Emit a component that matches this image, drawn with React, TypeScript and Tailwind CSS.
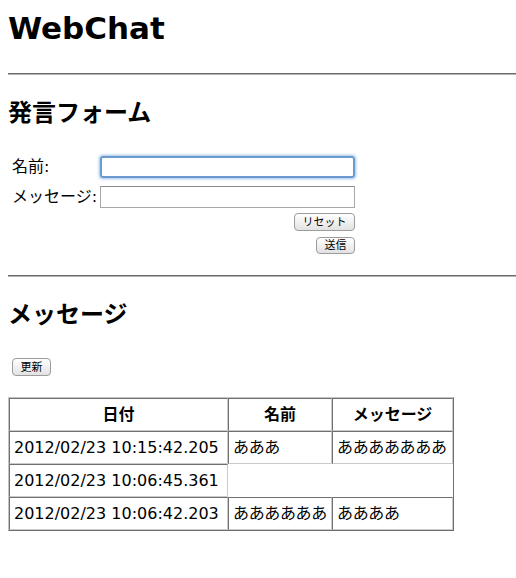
import React from 'react';

type Row = { date: string; name?: string; message?: string };

const rows: Row[] = [
  { date: '2012/02/23 10:15:42.205', name: 'あああ', message: 'あああああああ' },
  { date: '2012/02/23 10:06:45.361' },
  { date: '2012/02/23 10:06:42.203', name: 'ああああああ', message: 'ああああ' },
];

const btn =
  'border border-[#9c9c9c] rounded-[4px] bg-gradient-to-b from-white to-[#e2e2e2] text-[11px] leading-none text-black flex items-center justify-center';

const cell =
  'border border-t-[#707070] border-l-[#707070] border-r-[#cacaca] border-b-[#cacaca] px-1 h-[33px] p-0 whitespace-nowrap';

const Rule = () => (
  <div className="-mr-2 h-[2px] border-t border-t-[#6a6a6a] border-b border-b-[#b4b4b4]" />
);

export default function App() {
  return (
    <div className="min-h-[578px] bg-white px-2 text-black font-['DejaVu_Sans','Noto_Sans_CJK_JP',sans-serif]">
      <h1 className="pt-2 text-[31px] leading-[40px] font-bold">WebChat</h1>

      <div className="mt-[25px]">
        <Rule />
      </div>

      <h2 className="mt-6 text-[24px] leading-[28px] font-bold">発言フォーム</h2>

      <div className="ml-1 mt-[29px] w-[343px]">
        <div className="grid grid-cols-[88px_255px] items-center gap-y-2 text-[16px] leading-[22px]">
          <label>名前:</label>
          <input
            type="text"
            className="h-[22px] rounded-[3px] border-2 border-[#6b9ad0] shadow-[0_0_3px_1px_#9cc0e8] outline-none"
          />
          <label>メッセージ:</label>
          <input
            type="text"
            className="h-[22px] border border-[#a8a8a8] border-t-[#8d8d8d] outline-none"
          />
        </div>
        <div className="flex flex-col items-end">
          <button className={`${btn} mt-[5px] h-[18px] w-[61px]`}>リセット</button>
          <button className={`${btn} mt-[6px] h-[17px] w-[39px]`}>送信</button>
        </div>
      </div>

      <div className="mt-[21px]">
        <Rule />
      </div>

      <h2 className="mt-6 text-[24px] leading-[28px] font-bold">メッセージ</h2>

      <button className={`${btn} ml-1 mt-[29px] h-[18px] w-[39px]`}>更新</button>

      <table className="mt-[21px] border-separate border-spacing-0 border border-t-[#c4c4c4] border-l-[#c4c4c4] border-r-[#6e6e6e] border-b-[#6e6e6e] text-[16px]">
        <thead>
          <tr>
            <th className={`${cell} w-[219px] text-center font-bold`}>日付</th>
            <th className={`${cell} w-[104px] text-center font-bold`}>名前</th>
            <th className={`${cell} w-[121px] text-center font-bold`}>メッセージ</th>
          </tr>
        </thead>
        <tbody>
          {rows.map(r => (
            <tr key={r.date}>
              <td className={cell}>{r.date}</td>
              {r.name && <td className={`${cell} tracking-[-0.35px]`}>{r.name}</td>}
              {r.message && <td className={`${cell} tracking-[-0.35px]`}>{r.message}</td>}
            </tr>
          ))}
        </tbody>
      </table>
    </div>
  );
}
